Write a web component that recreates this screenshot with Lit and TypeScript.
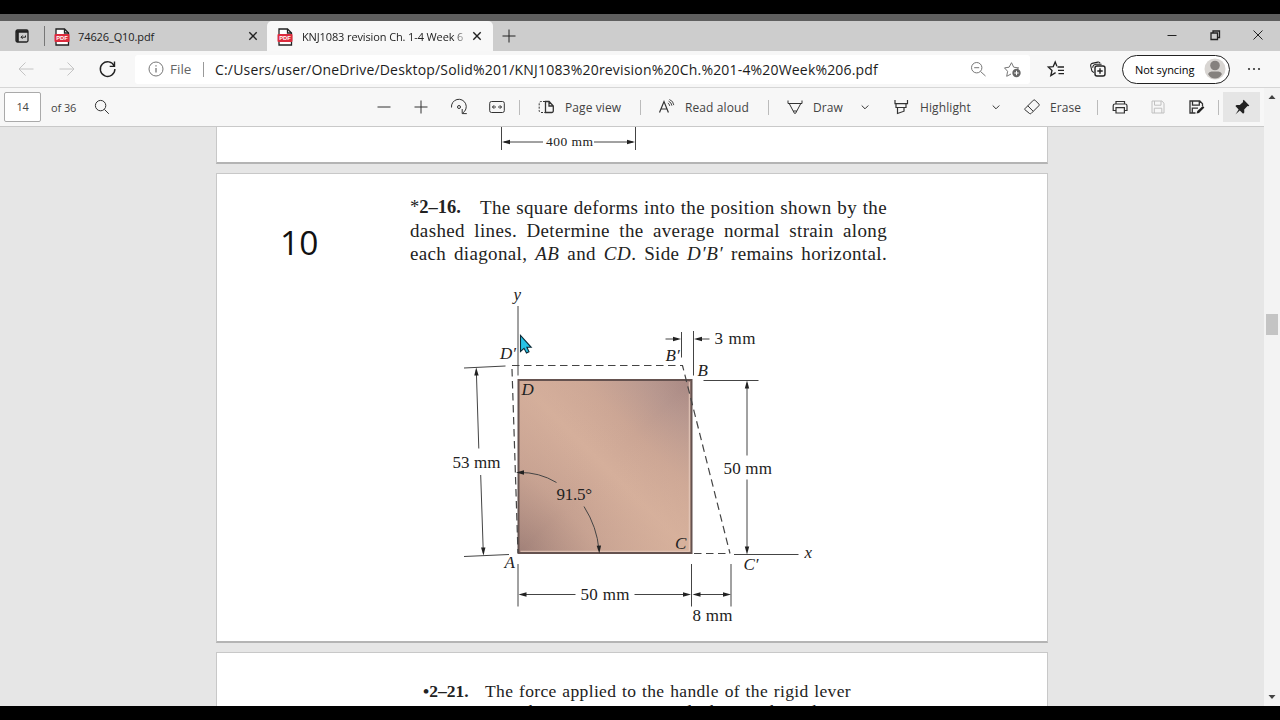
import { LitElement, html, svg, css } from 'lit';
import { customElement, property } from 'lit/decorators.js';

const icons = {
  pdf: svg`
    <path d="M4 3h8.5l4 4v12H4z" fill="#fff" stroke="#222" stroke-width="1.3"/>
    <path d="M12.5 3v4h4" fill="none" stroke="#222" stroke-width="1.3"/>
    <rect x="2.5" y="8" width="15" height="8" rx="1" fill="#dc2b3d" stroke="none"/>
    <text x="10" y="14.1" font-family="Liberation Sans" font-size="5.8" font-weight="700"
      fill="#fff" stroke="none" text-anchor="middle">PDF</text>`,
  tabs: svg`<rect x="4" y="4" width="12" height="12" rx="1.5" stroke-width="1.3"/>
    <path d="M4 5.5h12M5.5 5v11" stroke-width="2.6"/>
    <path d="M13.5 9.5v1.7H9m1.6-1.7L9 11.2l1.6 1.6"/>`,
  close: svg`<path d="M6.3 6.3l7.4 7.4M13.7 6.3l-7.4 7.4" stroke-width="1.4"/>`,
  winClose: svg`<path d="M5.5 5.5l9 9M14.5 5.5l-9 9"/>`,
  winMin: svg`<path d="M5.5 10.5h9"/>`,
  winMax: svg`<path d="M6 8h6.5v6.5H6zM8 8V6h6.5v6.5h-2" stroke-width="1.3"/>`,
  plus: svg`<path d="M3.5 10h13M10 3.5v13"/>`,
  minus: svg`<path d="M3.5 10h13"/>`,
  back: svg`<path d="M17.5 10H3M9.5 3.5L3 10l6.5 6.5"/>`,
  forward: svg`<path d="M2.5 10H17M10.5 3.5L17 10l-6.5 6.5"/>`,
  reload: svg`<path d="M16.3 7.2A7.3 7.3 0 1 0 16.9 10M16.5 2.6v4.8h-4.8" stroke-width="1.4"/>`,
  info: svg`<circle cx="10" cy="10" r="7"/><path d="M10 9v4.6M10 6.2v1.4" stroke-width="1.3"/>`,
  zoomOut: svg`<circle cx="8.7" cy="8.7" r="5.2"/><path d="M12.5 12.5l5 4.5M6.2 8.7h5"/>`,
  starAdd: svg`<path d="M9 15l-4.3 2.3.9-5L2.5 8.9l4.6-.7L9.500 3.700l2.200 4.500 5 .7-1.800 1.500"/>
    <circle cx="14.500" cy="14" r="4.2" fill="#666" stroke="none"/>
    <path d="M14.500 11.8v4.4M12.300 14h4.4" stroke="#fff"/>`,
  starList: svg`<path d="M9.6 13.6l-4.8 3 1.2-5.2L2.3 8l4.9-.4L9.2 3l1.7 4.3" stroke-width="1.3"/>
    <path d="M11.500 8h6.500M12 11.3h6M12.500 14.6h5.5" stroke-width="1.3"/>`,
  collections: svg`<rect x="7" y="7" width="10" height="10" rx="2" stroke-width="1.4"/>
    <path d="M12 9.3v5.4M9.3 12h5.4" stroke-width="1.4"/>
    <path d="M5.8 13.6L3.9 12 2.7 6.8a2 2 0 0 1 1.5-2.4l5.6-1.3a2 2 0 0 1 2.3 1.2M4.7 8.8A3.7 3.7 0 0 1 8 5.2h5.6" stroke-width="1.1"/>`,
  dots: svg`<g fill="#333" stroke="none"><circle cx="5" cy="10" r="1.1"/><circle cx="10" cy="10" r="1.1"/><circle cx="15" cy="10" r="1.1"/></g>`,
  search: svg`<circle cx="8.6" cy="8.6" r="5.2"/><path d="M12.4 12.4l4.4 4.4"/>`,
  rotate: svg`<path d="M2.5 10.5A7.4 7.4 0 1 1 13.7 16M13.2 12v4.6h4.6"/><circle cx="10" cy="10" r="1.5"/>`,
  fit: svg`<rect x="2.7" y="4.5" width="14.6" height="11" rx="1.8"/>
    <path d="M5.6 10H9m2 0h3.4M7.2 8.2L5.4 10l1.8 1.8M12.8 8.2l1.8 1.8-1.8 1.8"/>`,
  pageView: svg`<path d="M9 4.5H5a1.8 1.8 0 0 0-1.8 1.8v7.4A1.8 1.8 0 0 0 5 15.5h4" stroke-dasharray="2 1.3"/>
    <path d="M9.5 4.5h3.6L17.3 9v5a1.5 1.5 0 0 1-1.5 1.5H9.5zM13 4.5V9h4.3" stroke-width="1.3"/>`,
  read: svg`<path d="M3.5 15.5L8 4.5l4.4 11M5 12h6" stroke-width="1.2"/>
    <path d="M11.8 6.1q1.8.8 1.9 2.8M12.6 4.2q3 1.3 3.3 4.5M13.4 2.5q4 1.5 4.4 5.6" stroke-width="0.9"/>`,
  draw: svg`<path d="M3 3.5v3h14v-3M4.2 6.5l5.2 9.8h1.2l5.2-9.8M8.3 14h3.4"/>`,
  highlight: svg`<path d="M4 3v3.7h12.5V3M5 6.7v3.8h10V6.7M6.5 10.5v6l6.5-2.3v-3.7" stroke-width="1.2"/>`,
  chevron: svg`<path d="M6.7 8.5L10 11.8l3.3-3.3"/>`,
  erase: svg`<path d="M2.8 11.8l8.6-8.6q.8-.7 1.6 0l3.9 3.9q.7.8 0 1.6l-7.8 7.8q-.8.6-1.6 0l-4.7-3.9q-.5-.4 0-.8zM5.8 8.8l5.3 5.4"/>`,
  print: svg`<path d="M6 7V4.5h8.5V7M5.5 13.5H3.2V8.8Q3.2 7 5 7h10.2Q17 7 17 8.8v4.7h-2.3M6 10.7h8.4V16H6z" stroke-width="1.2"/>`,
  save: svg`<path d="M4 4h9.8L16 6.2V16H4zM6.5 4v4.2h6.5V4M6.3 16v-4.8h7.5V16"/>`,
  saveAs: svg`<path d="M9.5 16H4V4h9.8L16.5 6.7V9M6.5 4v4.2h6.8V4M6.3 16v-4.8H12" stroke-width="1.3"/>
    <path d="M10.5 16.6l.8-2.7 5.5-5 1.6 1.6-5.4 5.4z" fill="#222" stroke="none"/>`,
  pin: svg`<path d="M11.7 2.8l5.6 5.6-1 .8-.8-.1-3.3 3.3.1 3.2-1.2 1.2-3.3-3.3-4.4 4.1.9-1.4 2.3-3.8-3.2-3.3 1.2-1.1 3.2.1 3.3-3.2-.2-1.1z" fill="#222" stroke="none"/>`,
};

type IconName = keyof typeof icons;

const icon = (name: IconName, tone = '') => html`
  <svg class="icon ${tone}" viewBox="0 0 20 20">${icons[name]}</svg>
`;

// arrowhead with its tip at x, y; 0 degrees points right
const head = (x: number, y: number, angle: number) => svg`
  <path class="head" d="M0 0L-8 -2.2V2.2Z" transform="translate(${x} ${y}) rotate(${angle})"/>
`;

@customElement('tab-strip')
export class TabStrip extends LitElement {
  static styles = css`
    :host {
      display: flex;
      height: 30px;
      background: #cdcdcd;
      font: 11px 'Open Sans', sans-serif;
      color: #222;
    }

    .icon {
      width: 20px;
      height: 20px;
      flex: none;
      fill: none;
      stroke: #222;
    }

    .menu {
      display: flex;
      align-items: center;
      justify-content: flex-end;
      box-sizing: border-box;
      width: 45px;
      height: 20px;
      margin: 5px 0;
      padding-right: 12px;
      border-right: 1px solid #777;
    }

    .tab {
      display: flex;
      align-items: center;
      box-sizing: border-box;
    }

    .tab .name {
      flex: 1;
      margin-left: 7px;
      white-space: nowrap;
      overflow: hidden;
    }

    .first {
      width: 222px;
      padding: 0 4px 0 7px;
    }

    .first .name {
      margin-left: 6px;
      letter-spacing: -0.1px;
    }

    .active {
      width: 226px;
      padding: 0 6px 0 8px;
      background: #f8f8f8;
      border-radius: 5px 5px 0 0;
    }

    .active .name {
      letter-spacing: -0.12px;
      mask-image: linear-gradient(to right, #000 92%, transparent 101%);
    }

    .new {
      display: flex;
      align-items: center;
      margin-left: 6px;
      flex: 1;
    }

    .window {
      display: flex;
      align-items: center;
      gap: 23px;
      padding: 0 12px 3px 0;
    }
  `;

  render() {
    return html`
      <div class="menu">${icon('tabs')}</div>
      <div class="tab first">
        ${icon('pdf')}<span class="name">74626_Q10.pdf</span>${icon('close')}
      </div>
      <div class="tab active">
        ${icon('pdf')}<span class="name">KNJ1083 revision Ch. 1-4 Week 6</span>${icon('close')}
      </div>
      <div class="new">${icon('plus')}</div>
      <div class="window">${icon('winMin')}${icon('winMax')}${icon('winClose')}</div>
    `;
  }
}

@customElement('address-bar')
export class AddressBar extends LitElement {
  @property({ type: String })
  url = '';

  static styles = css`
    :host {
      display: flex;
      align-items: center;
      box-sizing: border-box;
      height: 37px;
      padding-left: 16px;
      background: #f7f7f7;
      border-bottom: 1px solid #d6d6d6;
      font-family: 'Open Sans', sans-serif;
    }

    .icon {
      width: 20px;
      height: 20px;
      flex: none;
      fill: none;
      stroke: #222;
    }

    .off {
      stroke: #c4c4c4;
    }

    .soft {
      stroke: #777;
    }

    .nav {
      display: flex;
      gap: 21px;
      width: 119px;
    }

    .field {
      display: flex;
      align-items: center;
      box-sizing: border-box;
      width: 895px;
      height: 29px;
      padding: 0 8px 0 11px;
      border-radius: 3px;
      background: #fff;
      font-size: 14px;
    }

    .scheme {
      width: 33px;
      margin-left: 4px;
      border-right: 1px solid #999;
      color: #666;
      font-size: 13.5px;
      line-height: 15px;
    }

    .url {
      flex: 1;
      margin-left: 11px;
      color: #1c1c1c;
      letter-spacing: 0.18px;
      white-space: nowrap;
    }

    .field .icon + .icon {
      margin-left: 14px;
    }

    .actions {
      display: flex;
      gap: 22px;
      margin-left: 16px;
    }

    .profile {
      display: flex;
      align-items: center;
      justify-content: space-between;
      box-sizing: border-box;
      width: 108px;
      height: 29px;
      margin: 0 14px;
      padding: 0 3px 0 12px;
      border: 1.4px solid #222;
      border-radius: 15px;
      background: #fff;
      font-size: 11px;
      letter-spacing: -0.05px;
      white-space: nowrap;
    }

    .avatar {
      width: 22px;
      height: 22px;
    }
  `;

  render() {
    return html`
      <div class="nav">${icon('back', 'off')}${icon('forward', 'off')}${icon('reload')}</div>
      <div class="field">
        ${icon('info', 'soft')}
        <span class="scheme">File</span>
        <span class="url">${this.url}</span>
        ${icon('zoomOut', 'soft')}${icon('starAdd', 'soft')}
      </div>
      <div class="actions">${icon('starList')}${icon('collections')}</div>
      <div class="profile">
        Not syncing
        <svg class="avatar" viewBox="0 0 22 22">
          <circle cx="11" cy="11" r="10.5" fill="#d8d5d2" />
          <circle cx="11" cy="7.5" r="4.8" fill="#85817e" />
          <path d="M4 16q1-2.5 3.5-2.5h7Q17 13.5 18 16q-2.5 4.5-7 4.5T4 16z" fill="#85817e" />
        </svg>
      </div>
      ${icon('dots')}
    `;
  }
}

@customElement('pdf-toolbar')
export class PdfToolbar extends LitElement {
  @property({ type: Number })
  page = 1;

  @property({ type: Number })
  total = 1;

  static styles = css`
    :host {
      display: grid;
      grid-template-columns:
        51px 41px 282px 37px 38px 38px 32px
        17px 29px 75px 16px 29px 83px
        17px 28px 42px 36px 29px 66px 36px 28px 47px
        13px 38px 38px 32px 5px 37px;
      align-items: center;
      box-sizing: border-box;
      height: 39px;
      background: #f7f7f7;
      border-bottom: 1px solid #c9c9c9;
      font: 12px 'Open Sans', sans-serif;
      color: #444;
      letter-spacing: 0.1px;
      white-space: nowrap;
    }

    .icon {
      width: 20px;
      height: 20px;
      display: block;
      fill: none;
      stroke: #333;
    }

    .off {
      stroke: #c0c0c0;
    }

    .page {
      box-sizing: border-box;
      width: 37px;
      height: 30px;
      margin-left: 4px;
      border: 1px solid #aaa;
      border-radius: 2px;
      background: #fff;
      font-size: 11px;
      line-height: 28px;
      letter-spacing: -0.3px;
      text-align: center;
    }

    .total {
      font-size: 11px;
      letter-spacing: -0.1px;
    }

    .sep {
      width: 1px;
      height: 15px;
      background: #bbb;
    }

    .pinned {
      display: grid;
      place-items: center;
      height: 30px;
      background: #e5e5e5;
    }
  `;

  render() {
    const sep = html`<span class="sep"></span>`;
    return html`
      <span class="page">${this.page}</span>
      <span class="total">of ${this.total}</span>
      ${icon('search')} ${icon('minus')} ${icon('plus')} ${icon('rotate')} ${icon('fit')} ${sep}
      ${icon('pageView')}<span>Page view</span>${sep}
      ${icon('read')}<span>Read aloud</span>${sep}
      ${icon('draw')}<span>Draw</span>${icon('chevron')}
      ${icon('highlight')}<span>Highlight</span>${icon('chevron')}
      ${icon('erase')}<span>Erase</span>${sep}
      ${icon('print')} ${icon('save', 'off')} ${icon('saveAs')} ${sep}
      <span class="pinned">${icon('pin')}</span>
    `;
  }
}

@customElement('strain-figure')
export class StrainFigure extends LitElement {
  static styles = css`
    :host {
      display: block;
    }

    svg {
      display: block;
      width: 400px;
      height: 350px;
      fill: none;
      stroke: #444;
    }

    text {
      font: 17px 'Liberation Serif', serif;
      fill: #222;
      stroke: none;
    }

    .it {
      font-style: italic;
    }

    .head {
      fill: #222;
      stroke: none;
    }

    .dash {
      stroke-dasharray: 7.5 4.5;
      stroke-width: 1.2;
    }
  `;

  render() {
    return html`
      <svg viewBox="440 285 400 350">
        <defs>
          <linearGradient id="plate" x1="0" y1="1" x2="1" y2="0">
            <stop offset="0" stop-color="#a08078" />
            <stop offset="0.26" stop-color="#c5a090" />
            <stop offset="0.5" stop-color="#d5af9b" />
            <stop offset="0.68" stop-color="#cba594" />
            <stop offset="0.86" stop-color="#b6968e" />
            <stop offset="1" stop-color="#a88883" />
          </linearGradient>
          <linearGradient id="sheen" x1="0" y1="0" x2="1" y2="1">
            <stop offset="0" stop-color="#d3ad9b" stop-opacity="0.5" />
            <stop offset="0.5" stop-color="#d6b09c" stop-opacity="0" />
            <stop offset="1" stop-color="#d9b39d" stop-opacity="0.6" />
          </linearGradient>
        </defs>

        <rect x="518.5" y="380" width="173" height="173" fill="url(#plate)" stroke="none" />
        <rect x="518.5" y="380" width="173" height="173" fill="url(#sheen)" stroke="#65524f" stroke-width="2" />
        <path d="M520.5 551.3H689.3V382" stroke="#e6cabc" />

        <path d="M518 306V375.5M734 554.5H798.5" />
        <path class="dash" d="M512 365.5H682.5L730 553.5M512 369L518 553M694 553.5H730" />

        <path d="M464 368L505.5 366M464 556.5L509 554.5M476.3 370L478.8 448.5M480.7 475L483.3 553" />
        ${head(476.2, 367.5, -92)} ${head(483.5, 555.5, 88)}

        <path d="M681.5 332V357.5M693.5 331V375.5M665.5 339H678M697 339H709.5" />
        ${head(681, 339, 0)} ${head(694, 339, 180)}

        <path d="M703.5 380.5H758.5M747 383V455.5M747 479.5V551" />
        ${head(747, 380.5, -90)} ${head(747, 554.5, 90)}

        <path d="M518 564V606.5M691.5 564V606.5M731 564V606.5" />
        <path d="M521 594.5H575.5M634.5 594.5H689M695 594.5H728" />
        ${head(518.5, 594.5, 180)} ${head(691, 594.5, 0)} ${head(692.5, 594.5, 180)} ${head(731, 594.5, 0)}

        <path d="M519 472.5Q539 472 556.5 482.5M584 506.5Q597 527 599 550" />
        ${head(516, 472.5, 180)} ${head(599.3, 553.5, 87)}

        <text class="it" x="513.5" y="300">y</text>
        <text class="it" x="804.5" y="558">x</text>
        <text class="it" x="500" y="359">D′</text>
        <text class="it" x="521.5" y="395">D</text>
        <text class="it" x="665.5" y="361">B′</text>
        <text class="it" x="697.5" y="375.5">B</text>
        <text class="it" x="675" y="548.5">C</text>
        <text class="it" x="743.5" y="570">C′</text>
        <text class="it" x="504.5" y="568">A</text>
        <text x="714.5" y="343.5" textLength="41">3 mm</text>
        <text x="452.5" y="467.5" textLength="48">53 mm</text>
        <text x="723.5" y="473.5" textLength="48.5">50 mm</text>
        <text x="580.5" y="599.5" textLength="49">50 mm</text>
        <text x="692.5" y="620.5" textLength="40">8 mm</text>
        <text x="556.5" y="500" textLength="35.5">91.5°</text>

        <path d="M520.5 335.5V351.5L524 348.3L526.5 353L529 351.8L526.9 347.3H531.2Z"
          fill="#27c3e6" stroke="#0c2b38" stroke-width="1.1" />
      </svg>
    `;
  }
}

@customElement('app-root')
export class AppRoot extends LitElement {
  static styles = css`
    :host {
      display: flex;
      flex-direction: column;
      box-sizing: border-box;
      width: 1280px;
      height: 720px;
      overflow: hidden;
      border-top: 14px solid #000;
      border-bottom: 14px solid #000;
      background: #e6e6e6;
    }

    .edge {
      flex: none;
      height: 7px;
      background: #5f5f5f;
    }

    tab-strip,
    address-bar,
    pdf-toolbar {
      flex: none;
    }

    .reader {
      flex: 1;
      display: grid;
      grid-template-columns: 1264px 16px;
      min-height: 0;
    }

    .main {
      display: flex;
      flex-direction: column;
      min-height: 0;
    }

    .pages {
      flex: 1;
      min-height: 0;
      overflow: hidden;
      display: flex;
      flex-direction: column;
      align-items: center;
      gap: 9px;
    }

    .sheet {
      flex: none;
      box-sizing: border-box;
      width: 832px;
      background: #fff;
      border: 1px solid #c8c8c8;
      border-bottom: 2px solid #b4b4b4;
      font: 19px/23px 'Liberation Serif', serif;
      color: #222;
    }

    .before {
      height: 37px;
      border-top: none;
    }

    .before svg {
      display: block;
      margin-left: 280px;
      fill: none;
      stroke: #444;
    }

    .before text {
      font: 13.5px 'Liberation Serif', serif;
      fill: #222;
      stroke: none;
    }

    .head {
      fill: #222;
      stroke: none;
    }

    .current {
      display: grid;
      grid-template-columns: 193px 477px;
      height: 470px;
      align-content: start;
      padding-top: 22px;
    }

    .number {
      padding: 24px 0 0 63px;
      font: 33.5px/44px 'Open Sans', sans-serif;
      color: #111;
    }

    .line {
      display: block;
      letter-spacing: 0.35px;
      text-align: justify;
      text-align-last: justify;
      white-space: nowrap;
    }

    .line i {
      letter-spacing: 0.6px;
    }

    .lead {
      display: flex;
    }

    .lead b {
      width: 70px;
      flex: none;
      font-size: 18.5px;
    }

    .star {
      font-weight: 400;
    }

    .lead .line {
      flex: 1;
    }

    strain-figure {
      grid-column: 1 / -1;
      margin: 20px 0 0 223px;
    }

    .after {
      height: 120px;
      padding: 28px 0 0 206px;
      font-size: 17.5px;
      line-height: 20px;
    }

    .after .text {
      width: 428px;
    }

    .after .lead b {
      width: 62px;
      font-size: 17.5px;
    }

    .scrollbar {
      display: flex;
      flex-direction: column;
      align-items: center;
      justify-content: space-between;
      background: #f3f3f3;
      padding: 5px 0;
    }

    .scrollbar svg {
      width: 8px;
      height: 8px;
      fill: #444;
    }

    .track {
      flex: 1;
      padding-top: 213px;
    }

    .thumb {
      width: 12px;
      height: 21px;
      background: #c4c4c4;
    }
  `;

  render() {
    return html`
      <div class="edge"></div>
      <tab-strip></tab-strip>
      <address-bar
        url="C:/Users/user/OneDrive/Desktop/Solid%201/KNJ1083%20revision%20Ch.%201-4%20Week%206.pdf"
      ></address-bar>
      <div class="reader">
        <div class="main">
          <pdf-toolbar page="14" total="36"></pdf-toolbar>
          <div class="pages">
            <section class="sheet before">
              <svg width="150" height="29" viewBox="497 127 150 29">
                <path d="M501.5 126V150M635.5 126V150M504 142H543M594 142H633" />
                ${head(502, 142, 180)} ${head(635, 142, 0)}
                <text x="546" y="146" textLength="47">400 mm</text>
              </svg>
            </section>
            <section class="sheet current">
              <div class="number">10</div>
              <div class="text">
                <div class="lead">
                  <b><span class="star">*</span>2–16.</b>
                  <span class="line">The square deforms into the position shown by the</span>
                </div>
                <span class="line">dashed lines. Determine the average normal strain along</span>
                <span class="line"
                  >each diagonal, <i>AB</i> and <i>CD</i>. Side <i>D′B′</i> remains horizontal.</span
                >
              </div>
              <strain-figure></strain-figure>
            </section>
            <section class="sheet after">
              <div class="text">
                <div class="lead">
                  <b>•2–21.</b>
                  <span class="line">The force applied to the handle of the rigid lever</span>
                </div>
                <span class="line">arm causes the arm to rotate clockwise through an</span>
              </div>
            </section>
          </div>
        </div>
        <div class="scrollbar">
          <svg viewBox="0 0 8 8"><path d="M0.5 6L4 2l3.5 4z" /></svg>
          <div class="track"><div class="thumb"></div></div>
          <svg viewBox="0 0 8 8"><path d="M0.5 2L4 6l3.5-4z" /></svg>
        </div>
      </div>
    `;
  }
}
